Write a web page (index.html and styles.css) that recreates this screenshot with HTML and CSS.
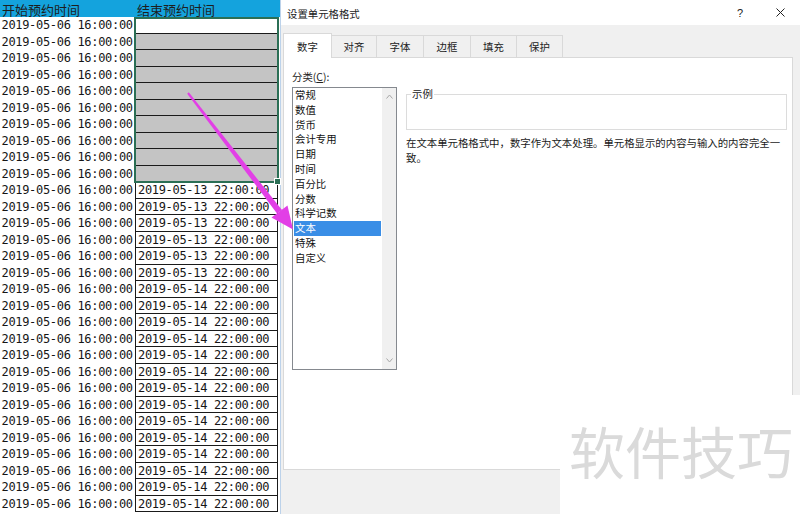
FILE: index.html
```html
<!DOCTYPE html>
<html lang="zh-CN">
<head>
<meta charset="utf-8">
<title>设置单元格格式</title>
<link rel="stylesheet" href="styles.css">
</head>
<body>
<div class="screen">
  <div class="sheet">
    <div class="hdr"><span class="hc">开始预约时间</span><span class="hc">结束预约时间</span></div>
    <div class="row"><span class="a">2019-05-06 16:00:00</span><span class="b"></span></div>
    <div class="row"><span class="a">2019-05-06 16:00:00</span><span class="b gray"></span></div>
    <div class="row"><span class="a">2019-05-06 16:00:00</span><span class="b gray"></span></div>
    <div class="row"><span class="a">2019-05-06 16:00:00</span><span class="b gray"></span></div>
    <div class="row"><span class="a">2019-05-06 16:00:00</span><span class="b gray"></span></div>
    <div class="row"><span class="a">2019-05-06 16:00:00</span><span class="b gray"></span></div>
    <div class="row"><span class="a">2019-05-06 16:00:00</span><span class="b gray"></span></div>
    <div class="row"><span class="a">2019-05-06 16:00:00</span><span class="b gray"></span></div>
    <div class="row"><span class="a">2019-05-06 16:00:00</span><span class="b gray"></span></div>
    <div class="row"><span class="a">2019-05-06 16:00:00</span><span class="b gray"></span></div>
    <div class="row"><span class="a">2019-05-06 16:00:00</span><span class="b">2019-05-13 22:00:00</span></div>
    <div class="row"><span class="a">2019-05-06 16:00:00</span><span class="b">2019-05-13 22:00:00</span></div>
    <div class="row"><span class="a">2019-05-06 16:00:00</span><span class="b">2019-05-13 22:00:00</span></div>
    <div class="row"><span class="a">2019-05-06 16:00:00</span><span class="b">2019-05-13 22:00:00</span></div>
    <div class="row"><span class="a">2019-05-06 16:00:00</span><span class="b">2019-05-13 22:00:00</span></div>
    <div class="row"><span class="a">2019-05-06 16:00:00</span><span class="b">2019-05-13 22:00:00</span></div>
    <div class="row"><span class="a">2019-05-06 16:00:00</span><span class="b">2019-05-14 22:00:00</span></div>
    <div class="row"><span class="a">2019-05-06 16:00:00</span><span class="b">2019-05-14 22:00:00</span></div>
    <div class="row"><span class="a">2019-05-06 16:00:00</span><span class="b">2019-05-14 22:00:00</span></div>
    <div class="row"><span class="a">2019-05-06 16:00:00</span><span class="b">2019-05-14 22:00:00</span></div>
    <div class="row"><span class="a">2019-05-06 16:00:00</span><span class="b">2019-05-14 22:00:00</span></div>
    <div class="row"><span class="a">2019-05-06 16:00:00</span><span class="b">2019-05-14 22:00:00</span></div>
    <div class="row"><span class="a">2019-05-06 16:00:00</span><span class="b">2019-05-14 22:00:00</span></div>
    <div class="row"><span class="a">2019-05-06 16:00:00</span><span class="b">2019-05-14 22:00:00</span></div>
    <div class="row"><span class="a">2019-05-06 16:00:00</span><span class="b">2019-05-14 22:00:00</span></div>
    <div class="row"><span class="a">2019-05-06 16:00:00</span><span class="b">2019-05-14 22:00:00</span></div>
    <div class="row"><span class="a">2019-05-06 16:00:00</span><span class="b">2019-05-14 22:00:00</span></div>
    <div class="row"><span class="a">2019-05-06 16:00:00</span><span class="b">2019-05-14 22:00:00</span></div>
    <div class="row"><span class="a">2019-05-06 16:00:00</span><span class="b">2019-05-14 22:00:00</span></div>
    <div class="row"><span class="a">2019-05-06 16:00:00</span><span class="b">2019-05-14 22:00:00</span></div>
    <div class="sel"></div>
  </div>

  <div class="dialog">
    <div class="titlebar">
      <span class="title">设置单元格格式</span>
      <span class="help">?</span>
      <svg class="close" width="9" height="9" viewBox="0 0 9 9"><path d="M0.5 0.5 L8.5 8.5 M8.5 0.5 L0.5 8.5" stroke="#222" stroke-width="1" fill="none"/></svg>
    </div>
    <div class="dbody">
      <div class="tabs">
        <span class="tab on w49">数字</span>
        <span class="tab w46">对齐</span>
        <span class="tab w48">字体</span>
        <span class="tab w48">边框</span>
        <span class="tab w47">填充</span>
        <span class="tab w47">保护</span>
      </div>
      <div class="panel">
        <div class="leftcol">
          <div class="lbl">分类(<u>C</u>):</div>
          <div class="list">
            <div class="items">
              <div class="item">常规</div>
              <div class="item">数值</div>
              <div class="item">货币</div>
              <div class="item">会计专用</div>
              <div class="item">日期</div>
              <div class="item">时间</div>
              <div class="item">百分比</div>
              <div class="item">分数</div>
              <div class="item">科学记数</div>
              <div class="item selected">文本</div>
              <div class="item">特殊</div>
              <div class="item">自定义</div>
            </div>
            <div class="sbar">
              <svg width="7" height="5" viewBox="0 0 7 5"><path d="M0.5 4.5 L3.5 1 L6.5 4.5" stroke="#a6a6a6" fill="none"/></svg>
              <svg width="7" height="5" viewBox="0 0 7 5"><path d="M0.5 0.5 L3.5 4 L6.5 0.5" stroke="#a6a6a6" fill="none"/></svg>
            </div>
          </div>
        </div>
        <div class="rightcol">
          <div class="group"><span class="glabel">示例</span></div>
          <p class="desc">在文本单元格格式中，数字作为文本处理。单元格显示的内容与输入的内容完全一<br>致。</p>
        </div>
      </div>
    </div>
  </div>

  <div class="watermark">软件技巧</div>

  <svg class="arrow" width="800" height="514" viewBox="0 0 800 514">
    <polygon points="187.2,93.7 188.8,92.3 282,210.1 277,213.5" fill="#e23fe6"/>
    <polygon points="293,229.5 271.5,217.6 287.5,205.4" fill="#e23fe6"/>
  </svg>
</div>
</body>
</html>
```

FILE: styles.css
```css
* { box-sizing: border-box; margin: 0; padding: 0; }
html, body { width: 800px; height: 514px; overflow: hidden; background: #fff; }

.screen { position: relative; display: flex; width: 800px; height: 514px; overflow: hidden; }

/* spreadsheet */
.sheet { position: relative; width: 280px; flex: none; background: #fff; }
.hdr { display: grid; grid-template-columns: 135px 143px; height: 17px; background: #14a3dd; }
.hc { font: 13px/15px "Noto Sans CJK SC", sans-serif; color: #1d1d1d; padding: 2px 0 0 2px; white-space: nowrap; }
.row { display: grid; grid-template-columns: 135px 143px; height: 16.5px; }
.a, .b { font-family: "DejaVu Sans Mono", monospace; font-size: 12px; letter-spacing: -0.32px; color: #151515; white-space: nowrap; overflow: hidden; }
.a { padding-left: 1.5px; line-height: 17px; }
.b { border-left: 1px solid #1a1a1a; border-right: 1px solid #1a1a1a; border-bottom: 1px solid #1a1a1a; padding-left: 2px; line-height: 16px; }
.b.gray { background: #c4c4c4; }
.sel { position: absolute; left: 134px; top: 17px; width: 145px; height: 166px; border: 2px solid #2b6f55; }
.sel::after { content: ""; position: absolute; right: -4px; bottom: -4px; width: 5px; height: 5px; background: #2b6f55; border: 1px solid #fff; }

/* dialog */
.dialog { flex: 1; display: flex; flex-direction: column; border-left: 1px solid #bcd2ea; background: #f0f0f0; }
.titlebar { height: 25px; flex: none; background: #fff; display: flex; align-items: center; padding-left: 6px; }
.title { font: 10.4px/14px "Noto Sans CJK SC", sans-serif; color: #222; margin-top: 2px; }
.help { margin-left: auto; font: 11px/14px "Liberation Sans", sans-serif; color: #222; margin-right: 33px; }
.close { margin-right: 15px; }

.dbody { flex: 1; padding: 8px 7px 0 2px; }
.tabs { position: relative; z-index: 1; display: flex; align-items: flex-end; height: 24px; }
.tab { height: 22px; background: #f0f0f0; border: 1px solid #d9d9d9; border-bottom: none; margin-left: -1px; font: 10.4px/22px "Noto Sans CJK SC", sans-serif; color: #222; text-align: center; }
.tab.on { height: 25px; margin-left: 0; margin-bottom: -1px; background: #fff; line-height: 26px; }
.w49 { width: 49px; }
.w46 { width: 46px; }
.w47 { width: 47px; }
.w48 { width: 48px; }

.panel { display: flex; width: 510px; height: 413px; background: #fff; border: 1px solid #d9d9d9; padding: 12px 0 0 8px; }
.leftcol { width: 105px; flex: none; }
.lbl { font: 10.4px/14px "Noto Sans CJK SC", sans-serif; color: #222; }
.lbl u { text-decoration: underline; text-underline-offset: 1px; }
.list { display: flex; margin-top: 3px; width: 105px; height: 283px; border: 1px solid #85898f; background: #fff; }
.items { flex: 1; padding: 0 1px; }
.item { height: 14.8px; padding-left: 1px; font: 10.4px/14.8px "Noto Sans CJK SC", sans-serif; color: #111; white-space: nowrap; }
.item.selected { background: #3a8ee6; color: #fff; }
.sbar { width: 14px; flex: none; background: #f0f0f0; display: flex; flex-direction: column; justify-content: space-between; align-items: center; padding: 6px 0 6px; }

.rightcol { margin-left: 9px; padding-top: 24px; width: 381px; }
.group { position: relative; height: 36px; border: 1px solid #dcdcdc; }
.glabel { position: absolute; left: 4px; top: -8px; padding: 0 1px; background: #fff; font: 10.4px/14px "Noto Sans CJK SC", sans-serif; color: #222; }
.desc { margin-top: 5px; font: 10.4px/15px "Noto Sans CJK SC", sans-serif; color: #1a1a1a; white-space: nowrap; }

/* overlays */
.watermark { position: absolute; left: 560px; top: 395px; width: 240px; height: 119px; background: #fff; padding: 27px 0 0 9px; font: 56px/56px "Noto Sans CJK SC", sans-serif; color: #dadada; white-space: nowrap; }
.arrow { position: absolute; left: 0; top: 0; pointer-events: none; }
```
